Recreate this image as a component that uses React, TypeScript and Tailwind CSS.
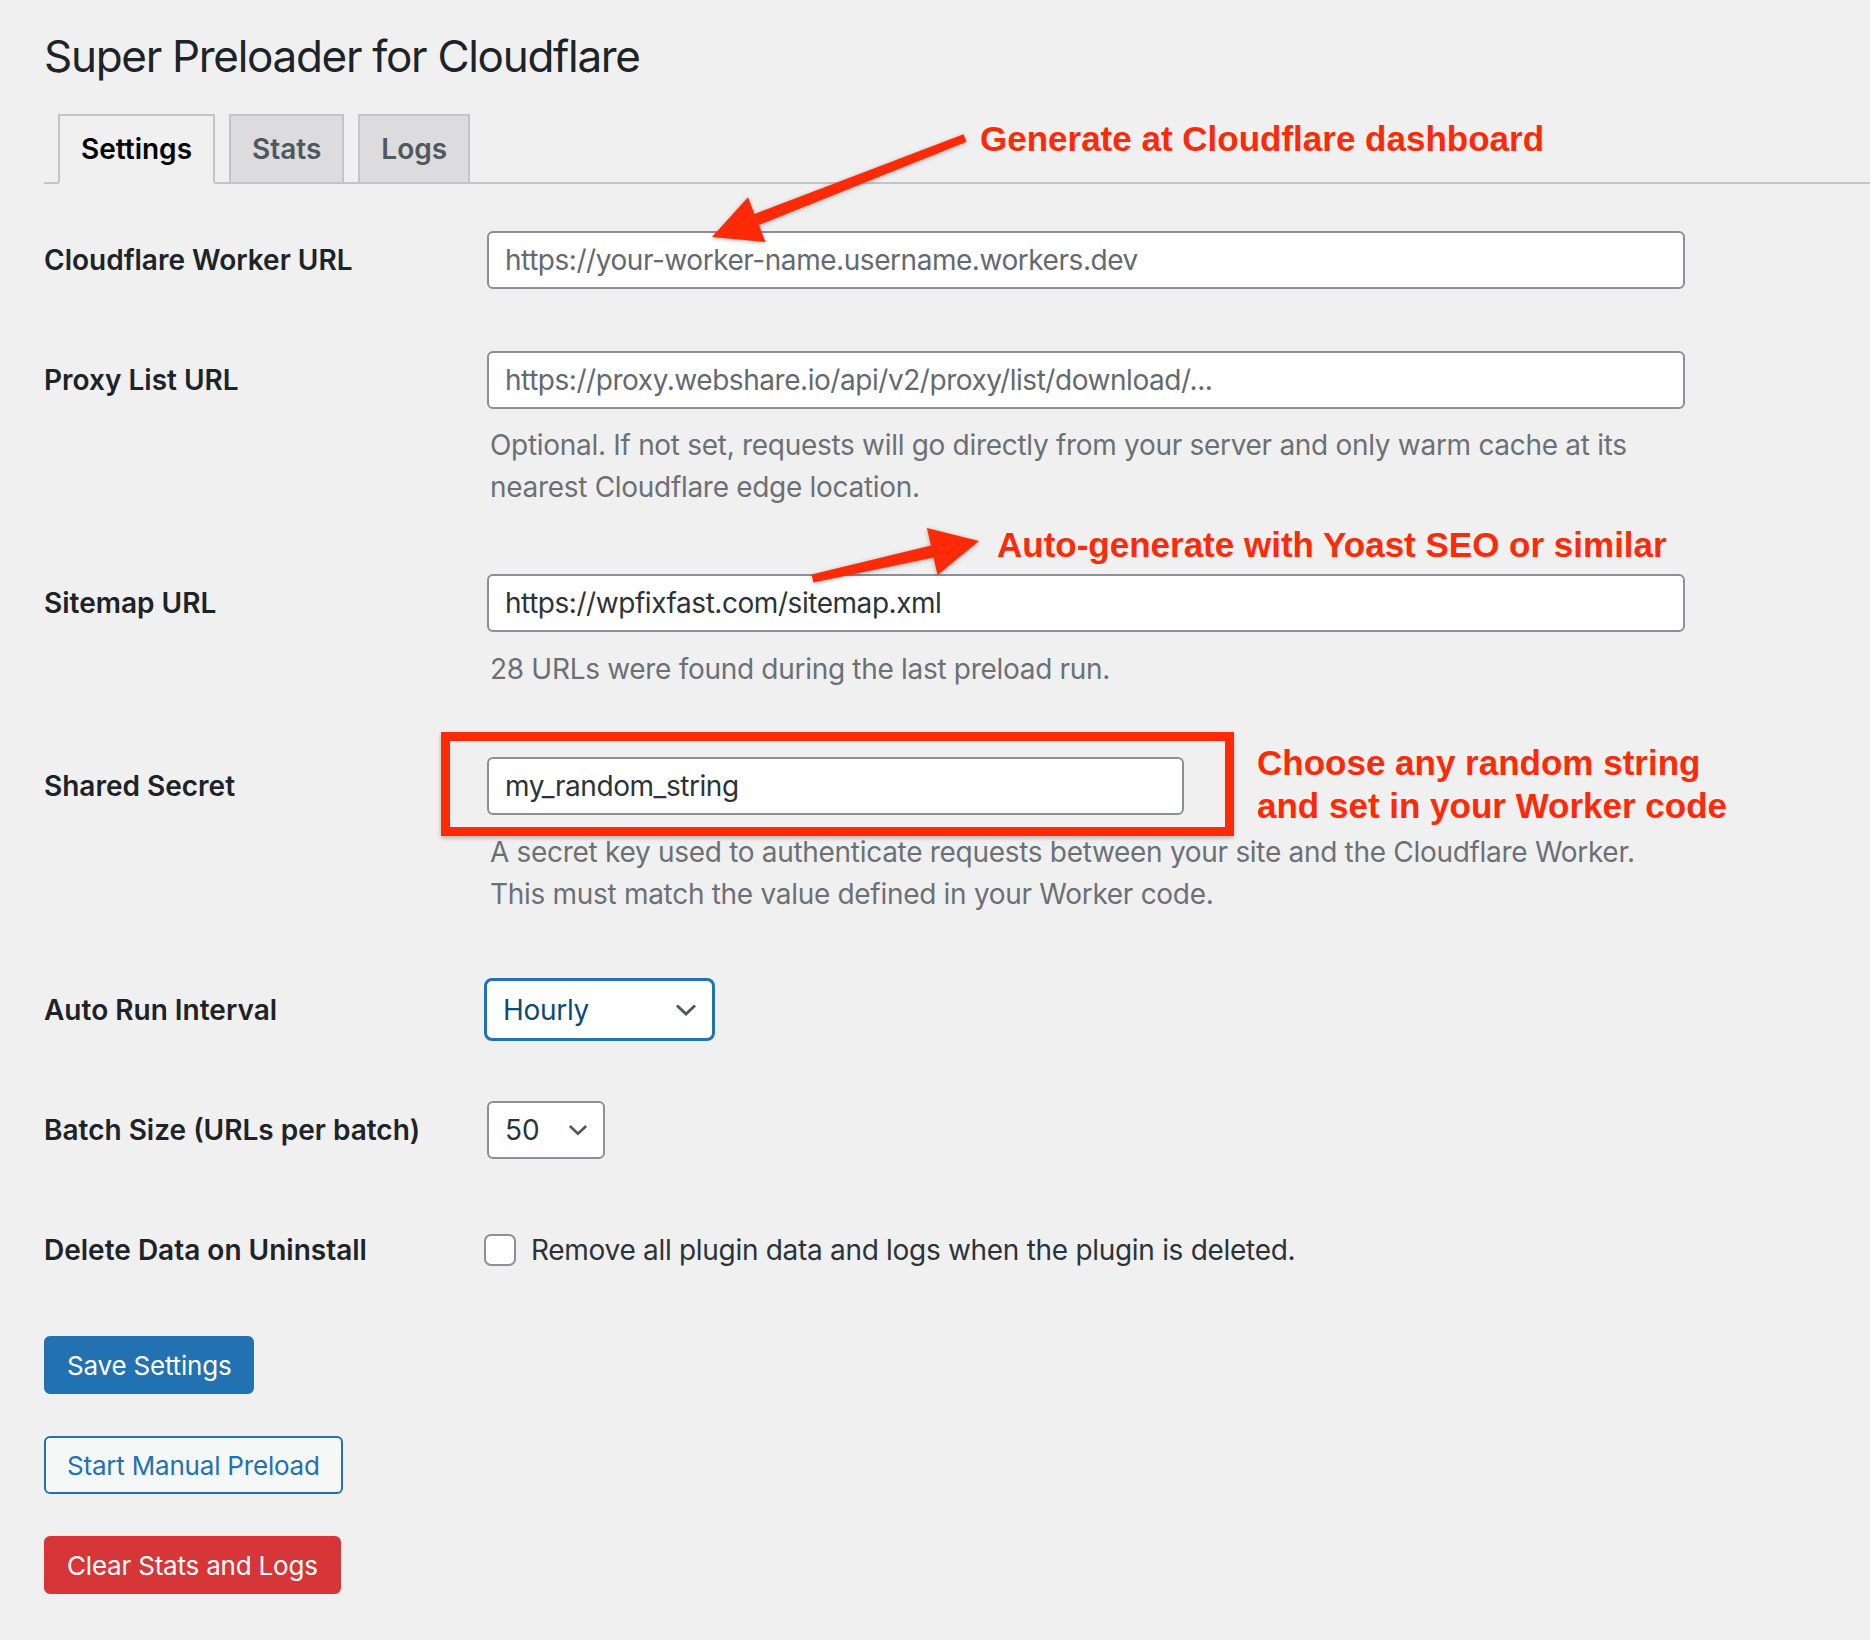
import type { ReactNode } from 'react';

function Chevron({ className }: { className?: string }) {
  return (
    <svg viewBox="0 0 22 12" className={className} fill="none" stroke="currentColor" strokeWidth="3" overflow="visible">
      <path d="M2 1.5l9 8.5 9-8.5" />
    </svg>
  );
}

function Row({ label, boxH, className = '', children }: { label: string; boxH: string; className?: string; children: ReactNode }) {
  return (
    <div className={`flex ${className}`}>
      <div className={`flex w-[443px] shrink-0 items-center ${boxH}`}>
        <span className="text-[28px] font-semibold leading-[36px] text-[#1d2327]">{label}</span>
      </div>
      <div>{children}</div>
    </div>
  );
}

function TextInput({ width, value, placeholder }: { width: string; value?: string; placeholder?: string }) {
  return (
    <input
      type="text"
      readOnly
      value={value ?? ''}
      placeholder={placeholder}
      className={`${width} block h-[58px] rounded-[6px] border-2 border-[#8c8f94] bg-white px-4 text-[28px] tracking-[-0.45px] text-[#2c3338] outline-none placeholder:text-[#646970]`}
    />
  );
}

function Description({ children }: { children: ReactNode }) {
  return <p className="pl-[3px] text-[28px] leading-[42px] tracking-[-0.3px] text-[#6c7075]">{children}</p>;
}

export default function App() {
  return (
    <div className="relative min-h-screen w-full bg-[#f0f0f1] pb-10 pl-[44px] font-[family-name:Inter,Noto_Sans,sans-serif] text-[#1d2327]">
      <h1 className="pt-[26px] text-[44px] font-normal leading-[60px] tracking-[-1.3px] text-[#1d2327]">Super Preloader for Cloudflare</h1>

      <nav className="mt-[28px] flex items-end gap-[14px] border-b-2 border-[#c3c4c7] pl-[14px]">
        <div className="-mb-[2px] h-[70px] border-2 border-[#c3c4c7] border-b-[#f0f0f1] bg-[#f0f0f1] px-[21px] text-[28px] font-semibold leading-[66px] text-black">Settings</div>
        <div className="-mb-[2px] h-[70px] border-2 border-[#c3c4c7] bg-[#dcdcde] px-[21px] text-[28px] font-semibold leading-[66px] text-[#50575e]">Stats</div>
        <div className="-mb-[2px] h-[70px] border-2 border-[#c3c4c7] bg-[#dcdcde] px-[21px] text-[28px] font-semibold leading-[66px] text-[#50575e]">Logs</div>
      </nav>

      <Row label="Cloudflare Worker URL" boxH="h-[58px]" className="mt-[47px]">
        <TextInput width="w-[1198px]" placeholder="https://your-worker-name.username.workers.dev" />
      </Row>

      <div className="mt-[62px]">
        <Row label="Proxy List URL" boxH="h-[58px]">
          <TextInput width="w-[1198px]" placeholder="https://proxy.webshare.io/api/v2/proxy/list/download/..." />
          <div className="mt-[15px]">
            <Description>
              Optional. If not set, requests will go directly from your server and only warm cache at its
              <br />
              nearest Cloudflare edge location.
            </Description>
          </div>
        </Row>
      </div>

      <Row label="Sitemap URL" boxH="h-[58px]" className="mt-[66px]">
        <TextInput width="w-[1198px]" value="https://wpfixfast.com/sitemap.xml" />
        <div className="mt-[16px]">
          <Description>28 URLs were found during the last preload run.</Description>
        </div>
      </Row>

      <Row label="Shared Secret" boxH="h-[58px]" className="mt-[67px]">
        <TextInput width="w-[697px]" value="my_random_string" />
        <div className="mt-[16px]">
          <Description>
            A secret key used to authenticate requests between your site and the Cloudflare Worker.
            <br />
            This must match the value defined in your Worker code.
          </Description>
        </div>
      </Row>

      <Row label="Auto Run Interval" boxH="h-[63px]" className="mt-[63px]">
        <div className="-ml-[3px] flex h-[63px] w-[231px] items-center justify-between rounded-[8px] border-[3px] border-[#2271b1] bg-white pl-4 pr-[15px]">
          <span className="text-[28px] tracking-[-0.3px] text-[#0a4b78]">Hourly</span>
          <Chevron className="h-[12px] w-[22px] text-[#50575e]" />
        </div>
      </Row>

      <Row label="Batch Size (URLs per batch)" boxH="h-[58px]" className="mt-[60px]">
        <div className="flex h-[58px] w-[118px] items-center justify-between rounded-[6px] border-2 border-[#8c8f94] bg-white pl-4 pr-[15px]">
          <span className="text-[28px] text-[#2c3338]">50</span>
          <Chevron className="h-[12px] w-[20px] text-[#50575e]" />
        </div>
      </Row>

      <Row label="Delete Data on Uninstall" boxH="h-[42px]" className="mt-[70px]">
        <label className="flex h-[42px] items-center">
          <span className="-ml-[3px] h-[32px] w-[32px] rounded-[7px] border-2 border-[#8c8f94] bg-white" />
          <span className="ml-[15px] text-[28px] tracking-[-0.3px] text-[#2c3338]">Remove all plugin data and logs when the plugin is deleted.</span>
        </label>
      </Row>

      <button className="mt-[65px] flex h-[58px] items-center rounded-[6px] border-2 border-[#2271b1] bg-[#2271b1] px-[21px] text-[26px] tracking-[-0.2px] text-white">
        Save Settings
      </button>
      <button className="mt-[42px] flex h-[58px] items-center rounded-[6px] border-2 border-[#2271b1] bg-[#f6f7f7] px-[21px] text-[26px] tracking-[-0.2px] text-[#2271b1]">
        Start Manual Preload
      </button>
      <button className="mt-[42px] flex h-[58px] items-center rounded-[6px] border-2 border-[#d63638] bg-[#d63638] px-[21px] text-[26px] tracking-[-0.2px] text-white">
        Clear Stats and Logs
      </button>

      {/* annotations drawn on top of the screenshot */}
      <div className="pointer-events-none absolute left-[441px] top-[732px] h-[104px] w-[793px] border-[9px] border-[#fd2a08] shadow-[0_2px_4px_rgba(0,0,0,0.25)]" />
      <svg className="pointer-events-none absolute left-0 top-0" width="1870" height="1640" viewBox="0 0 1870 1640">
        <g fill="#fd2a08" className="drop-shadow-[0_1px_2px_rgba(0,0,0,0.3)]">
          <polygon points="963.5,134.3 754.5,213.9 748,197.2 712,237 765.5,241.9 758.9,225.1 966.5,141.7" />
          <polygon points="811.6,574.6 930.9,545.6 926.9,528.1 979,541 937.5,574.9 933.5,557.4 813.4,582.4" />
        </g>
      </svg>
      <div className="pointer-events-none absolute left-[980px] top-[121px] whitespace-nowrap font-[family-name:Liberation_Sans,Arial,sans-serif] text-[35px] font-bold leading-[35px] text-[#fd2a08]">
        Generate at Cloudflare dashboard
      </div>
      <div className="pointer-events-none absolute left-[997px] top-[527px] whitespace-nowrap font-[family-name:Liberation_Sans,Arial,sans-serif] text-[35px] font-bold leading-[35px] text-[#fd2a08]">
        Auto-generate with Yoast SEO or similar
      </div>
      <div className="pointer-events-none absolute left-[1257px] top-[741px] whitespace-nowrap font-[family-name:Liberation_Sans,Arial,sans-serif] text-[35px] font-bold leading-[43px] text-[#fd2a08]">
        Choose any random string
        <br />
        and set in your Worker code
      </div>
    </div>
  );
}
